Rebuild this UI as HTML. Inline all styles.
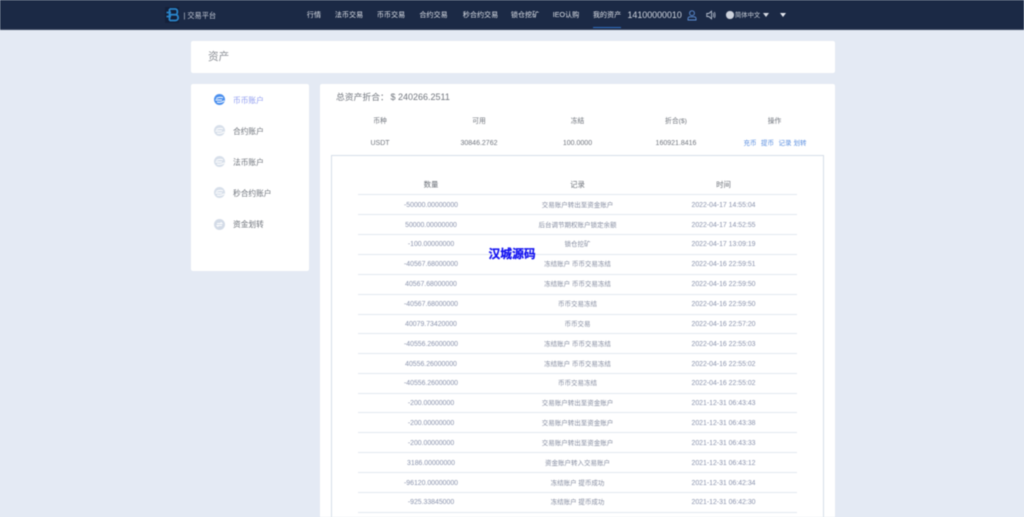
<!DOCTYPE html>
<html lang="zh-CN">
<head>
<meta charset="utf-8">
<title>资产</title>
<style>
*{box-sizing:border-box;margin:0;padding:0}
html,body{width:1024px;height:517px;overflow:hidden;background:#e4eaf4}
body{position:relative;font-family:"Liberation Sans","Noto Sans CJK SC",sans-serif;color:#6a7079}
#wrap{position:absolute;left:0;top:0;width:1024px;height:517px;filter:blur(.4px);overflow:hidden}
.a{position:absolute;white-space:nowrap}
header{position:absolute;left:0;top:0;width:1024px;height:29.5px;background:#1b2945;border-bottom:1px solid #3a4660}
.nav{position:absolute;top:10px;font-size:7.1px;line-height:11px;color:#dfe3ea;white-space:nowrap;transform:translateX(-50%)}
.card{position:absolute;background:#fff;border-radius:2px}
.side{position:absolute;left:233px;font-size:7.7px;line-height:11px;color:#6c7179;white-space:nowrap}
.ic{position:absolute;left:213.5px}
.hd{position:absolute;top:115.8px;font-size:6.8px;line-height:11px;color:#6f747c;transform:translateX(-50%);white-space:nowrap}
.v{position:absolute;top:137.8px;font-size:7px;line-height:11px;color:#70757e;transform:translateX(-50%);white-space:nowrap}
.lk{position:absolute;top:137.8px;font-size:6.5px;line-height:11px;color:#5b8fe0;transform:translateX(-50%);white-space:nowrap}
.th{position:absolute;top:178.5px;font-size:7.4px;line-height:11px;color:#6b7078;transform:translateX(-50%);white-space:nowrap}
.l{position:absolute;left:358px;width:439px;height:1px;background:#e2e8f0}
.n,.r,.t{position:absolute;margin-top:1px;font-size:6.9px;line-height:10px;color:#8a93ad;transform:translateX(-50%);white-space:nowrap}
.n{left:431px}.r{left:577.5px;color:#858ca0;font-size:6.5px}.t{left:723.5px}
</style>
</head>
<body>
<div id="wrap">
<header></header>
<svg class="a" style="left:165px;top:7px" width="15" height="16" viewBox="0 0 15 16"><rect width="14" height="16" fill="#14203a"/><path d="M1.5 5.5H6M1.5 9.5H6M4.5 2V13.5M4.5 2H10.5C13 2 13 7.7 10.5 7.7H5M10.5 7.7C14 7.7 14 13.5 10.5 13.5H4.5" fill="none" stroke="#2a86cc" stroke-width="1.8"/></svg>
<div class="a" style="left:183.5px;top:10px;font-size:7.2px;line-height:11px;color:#c6ccd8">| 交易平台</div>
<div class="nav" style="left:314px">行情</div>
<div class="nav" style="left:349px">法币交易</div>
<div class="nav" style="left:391px">币币交易</div>
<div class="nav" style="left:433.5px">合约交易</div>
<div class="nav" style="left:480.5px">秒合约交易</div>
<div class="nav" style="left:525px">锁仓挖矿</div>
<div class="nav" style="left:566px">IEO认购</div>
<div class="nav" style="left:607px">我的资产</div>
<div class="a" style="left:593px;top:26.5px;width:28px;height:1.2px;background:#2f6fc2"></div>
<div class="a" style="left:627.5px;top:9px;font-size:8.9px;line-height:12px;color:#d3d8e2">14100000010</div>
<svg class="a" style="left:687px;top:10px" width="10" height="11" viewBox="0 0 10 11"><circle cx="5" cy="3.2" r="2.4" fill="none" stroke="#5d8fd6" stroke-width=".9"/><path d="M1 10V8.6C1 7.4 2 6.8 3 6.8H7C8 6.8 9 7.4 9 8.6V10Z" fill="none" stroke="#5d8fd6" stroke-width=".9"/></svg>
<svg class="a" style="left:706px;top:10px" width="10" height="10" viewBox="0 0 10 10"><path d="M.8 3.5H2.8L5.5 1.2V8.8L2.8 6.5H.8Z" fill="none" stroke="#b6bfce" stroke-width=".9"/><path d="M7 3C7.8 4 7.8 6 7 7M8.3 2C9.4 3.5 9.4 6.5 8.3 8" fill="none" stroke="#b6bfce" stroke-width=".8"/></svg>
<div class="a" style="left:726px;top:11px;width:7.5px;height:7.5px;border-radius:50%;background:#cdd2dc"></div>
<div class="a" style="left:735px;top:10px;font-size:6.3px;line-height:11px;color:#ccd2dc">简体中文</div>
<svg class="a" style="left:763px;top:13px" width="6" height="4" viewBox="0 0 6 4"><path d="M0 0H6L3 4Z" fill="#d8dce4"/></svg>
<svg class="a" style="left:780px;top:13px" width="6" height="4" viewBox="0 0 6 4"><path d="M0 0H6L3 4Z" fill="#e4e7ee"/></svg>

<div class="card" style="left:191px;top:41px;width:644px;height:32px"></div>
<div class="a" style="left:208px;top:50px;font-size:10.6px;line-height:14px;color:#8b8f96">资产</div>

<div class="card" style="left:191px;top:84px;width:118px;height:187px"></div>
<svg class="ic" style="top:94px" width="11" height="11" viewBox="0 0 11 11"><circle cx="5.5" cy="5.5" r="5.5" fill="#4a8fee"/><path d="M2.2 4.6C4 3.2 7 3 9 3.8M1.5 6H8M3 8C5 8.7 8 8.2 10.5 6.8" stroke="#fff" stroke-width="1" fill="none"/></svg>
<svg class="ic" style="top:125px" width="11" height="11" viewBox="0 0 11 11"><circle cx="5.5" cy="5.5" r="5.5" fill="#d7dfea"/><path d="M2.2 4.6C4 3.2 7 3 9 3.8M1.5 6H8M3 8C5 8.7 8 8.2 10.5 6.8" stroke="#fff" stroke-width="1" fill="none"/></svg>
<svg class="ic" style="top:156px" width="11" height="11" viewBox="0 0 11 11"><circle cx="5.5" cy="5.5" r="5.5" fill="#d7dfea"/><path d="M2.2 4.6C4 3.2 7 3 9 3.8M1.5 6H8M3 8C5 8.7 8 8.2 10.5 6.8" stroke="#fff" stroke-width="1" fill="none"/></svg>
<svg class="ic" style="top:187px" width="11" height="11" viewBox="0 0 11 11"><circle cx="5.5" cy="5.5" r="5.5" fill="#d7dfea"/><path d="M2.2 4.6C4 3.2 7 3 9 3.8M1.5 6H8M3 8C5 8.7 8 8.2 10.5 6.8" stroke="#fff" stroke-width="1" fill="none"/></svg>
<svg class="ic" style="top:219px" width="11" height="11" viewBox="0 0 11 11"><circle cx="5.5" cy="5.5" r="5.5" fill="#d3dbe7"/><path d="M3 4.5H8L6.8 3.2M8 6.5H3L4.2 7.8" stroke="#fff" stroke-width=".9" fill="none"/></svg>
<div class="side" style="top:94.5px;color:#8f9cf0">币币账户</div>
<div class="side" style="top:125.5px">合约账户</div>
<div class="side" style="top:156.5px">法币账户</div>
<div class="side" style="top:187.5px">秒合约账户</div>
<div class="side" style="top:219px">资金划转</div>

<div class="card" style="left:320px;top:84px;width:515px;height:440px"></div>
<div class="a" style="left:336px;top:91px;font-size:8.8px;line-height:13px;color:#70757d">总资产折合：</div>
<div class="a" style="left:390.5px;top:91px;font-size:9px;line-height:13px;color:#70757d">$ 240266.2511</div>
<div class="hd" style="left:380px">币种</div>
<div class="hd" style="left:479px">可用</div>
<div class="hd" style="left:577.5px">冻结</div>
<div class="hd" style="left:676px">折合($)</div>
<div class="hd" style="left:774.5px">操作</div>
<div class="v" style="left:380px">USDT</div>
<div class="v" style="left:479px">30846.2762</div>
<div class="v" style="left:577.5px">100.0000</div>
<div class="v" style="left:676px">160921.8416</div>
<div class="lk" style="left:750px">充币</div>
<div class="lk" style="left:767.5px">提币</div>
<div class="lk" style="left:785px">记录</div>
<div class="lk" style="left:800px">划转</div>

<div class="a" style="left:331px;top:155px;width:493px;height:370px;border:1px solid #d6dee8;background:#fff"></div>
<div class="th" style="left:431px">数量</div>
<div class="th" style="left:577.5px">记录</div>
<div class="th" style="left:723.5px">时间</div>

<div class="l" style="top:194px"></div>
<div class="l" style="top:214px"></div>
<div class="l" style="top:234px"></div>
<div class="l" style="top:254px"></div>
<div class="l" style="top:274px"></div>
<div class="l" style="top:294px"></div>
<div class="l" style="top:314px"></div>
<div class="l" style="top:333px"></div>
<div class="l" style="top:353px"></div>
<div class="l" style="top:373px"></div>
<div class="l" style="top:393px"></div>
<div class="l" style="top:412px"></div>
<div class="l" style="top:432px"></div>
<div class="l" style="top:452px"></div>
<div class="l" style="top:472px"></div>
<div class="l" style="top:492px"></div>
<div class="l" style="top:512px"></div>

<div class="n" style="top:199.5px">-50000.00000000</div><div class="r" style="top:199.5px">交易账户转出至资金账户</div><div class="t" style="top:199.5px">2022-04-17 14:55:04</div>
<div class="n" style="top:219.5px">50000.00000000</div><div class="r" style="top:219.5px">后台调节期权账户锁定余额</div><div class="t" style="top:219.5px">2022-04-17 14:52:55</div>
<div class="n" style="top:239px">-100.00000000</div><div class="r" style="top:239px">锁仓挖矿</div><div class="t" style="top:239px">2022-04-17 13:09:19</div>
<div class="n" style="top:259px">-40567.68000000</div><div class="r" style="top:259px">冻结账户 币币交易冻结</div><div class="t" style="top:259px">2022-04-16 22:59:51</div>
<div class="n" style="top:279px">40567.68000000</div><div class="r" style="top:279px">冻结账户 币币交易冻结</div><div class="t" style="top:279px">2022-04-16 22:59:50</div>
<div class="n" style="top:299px">-40567.68000000</div><div class="r" style="top:299px">币币交易冻结</div><div class="t" style="top:299px">2022-04-16 22:59:50</div>
<div class="n" style="top:319px">40079.73420000</div><div class="r" style="top:319px">币币交易</div><div class="t" style="top:319px">2022-04-16 22:57:20</div>
<div class="n" style="top:338.5px">-40556.26000000</div><div class="r" style="top:338.5px">冻结账户 币币交易冻结</div><div class="t" style="top:338.5px">2022-04-16 22:55:03</div>
<div class="n" style="top:358.5px">40556.26000000</div><div class="r" style="top:358.5px">冻结账户 币币交易冻结</div><div class="t" style="top:358.5px">2022-04-16 22:55:02</div>
<div class="n" style="top:378px">-40556.26000000</div><div class="r" style="top:378px">币币交易冻结</div><div class="t" style="top:378px">2022-04-16 22:55:02</div>
<div class="n" style="top:398px">-200.00000000</div><div class="r" style="top:398px">交易账户转出至资金账户</div><div class="t" style="top:398px">2021-12-31 06:43:43</div>
<div class="n" style="top:418px">-200.00000000</div><div class="r" style="top:418px">交易账户转出至资金账户</div><div class="t" style="top:418px">2021-12-31 06:43:38</div>
<div class="n" style="top:438px">-200.00000000</div><div class="r" style="top:438px">交易账户转出至资金账户</div><div class="t" style="top:438px">2021-12-31 06:43:33</div>
<div class="n" style="top:457.5px">3186.00000000</div><div class="r" style="top:457.5px">资金账户转入交易账户</div><div class="t" style="top:457.5px">2021-12-31 06:43:12</div>
<div class="n" style="top:477.5px">-96120.00000000</div><div class="r" style="top:477.5px">冻结账户 提币成功</div><div class="t" style="top:477.5px">2021-12-31 06:42:34</div>
<div class="n" style="top:497px">-925.33845000</div><div class="r" style="top:497px">冻结账户 提币成功</div><div class="t" style="top:497px">2021-12-31 06:42:30</div>

<div class="a" style="left:488.5px;top:247px;font-size:11.8px;line-height:14px;font-weight:700;color:#1414f0;-webkit-text-stroke:.3px #1414f0">汉城源码</div>
</div>
</body>
</html>
